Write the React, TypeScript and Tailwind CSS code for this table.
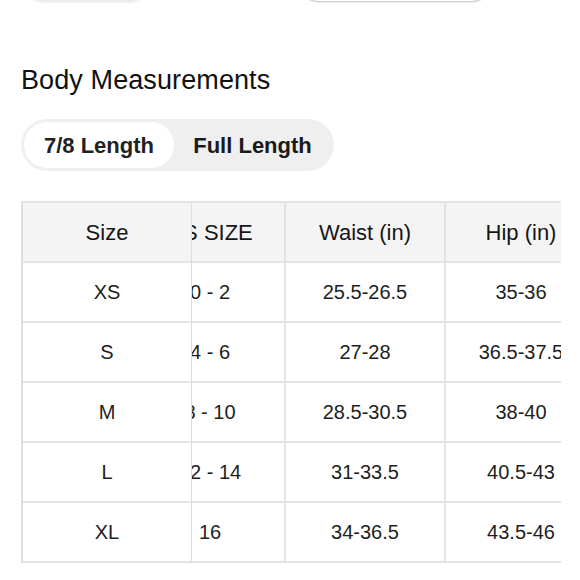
import React from 'react'

const rows = [
  { size: 'XS', us: '0 - 2', waist: '25.5-26.5', hip: '35-36' },
  { size: 'S', us: '4 - 6', waist: '27-28', hip: '36.5-37.5' },
  { size: 'M', us: '8 - 10', waist: '28.5-30.5', hip: '38-40' },
  { size: 'L', us: '12 - 14', waist: '31-33.5', hip: '40.5-43' },
  { size: 'XL', us: '16', waist: '34-36.5', hip: '43.5-46' },
]

const head = 'h-[60px] flex items-center justify-center bg-[#f4f4f4] border-b-2 border-[#e3e3e3] text-[22px] text-[#161616]'
const cell = 'h-[60px] flex items-center justify-center bg-white border-b-2 border-[#e3e3e3] text-[20px] text-[#1e1e1e]'

const App: React.FC = () => {
  return (
    <div className="min-h-screen bg-white pl-[21px] pr-[19px] font-['Liberation_Sans',Arial,sans-serif] overflow-hidden">
      {/* buttons above, scrolled mostly out of view */}
      <div className="flex -mt-[42px] h-[44px]">
        <div className="ml-[1px] w-[129px] h-full rounded-full border-2 border-[#ececec] bg-white shadow-[0_1px_2px_rgba(0,0,0,0.06)]" />
        <div className="ml-[146px] w-[196px] h-full rounded-full border border-[#cfcfcf] bg-white shadow-[0_1px_1px_rgba(0,0,0,0.08)]" />
      </div>

      <h2 className="mt-[62px] text-[27px] leading-[32px] text-[#111] tracking-[0.1px]">Body Measurements</h2>

      <div className="mt-[23px] inline-flex p-[3px] rounded-full bg-[#efefef]">
        <button className="w-[150px] h-[46px] rounded-full bg-white text-[22px] font-bold text-[#222]">7/8 Length</button>
        <button className="w-[157px] h-[46px] rounded-full text-[22px] font-bold text-[#1a1a1a]">Full Length</button>
      </div>

      <div className="mt-[30px] flex border-t-2 border-[#e3e3e3]">
        <div className="w-[171px] shrink-0 border-l-2 border-r border-[#dedede]">
          <div className={head}>Size</div>
          {rows.map((r) => (
            <div key={r.size} className={cell}>{r.size}</div>
          ))}
        </div>
        <div className="flex-1 overflow-hidden">
          <div className="flex -ml-[56px] w-max">
            <div className="w-[150px] border-r-2 border-[#e3e3e3]">
              <div className={head}>US SIZE</div>
              {rows.map((r) => (
                <div key={r.size} className={cell}>{r.us}</div>
              ))}
            </div>
            <div className="w-[160px] border-r-2 border-[#e3e3e3]">
              <div className={head}>Waist (in)</div>
              {rows.map((r) => (
                <div key={r.size} className={cell}>{r.waist}</div>
              ))}
            </div>
            <div className="w-[152px] border-r-2 border-[#e3e3e3]">
              <div className={head}>Hip (in)</div>
              {rows.map((r) => (
                <div key={r.size} className={cell}>{r.hip}</div>
              ))}
            </div>
          </div>
        </div>
      </div>
    </div>
  )
}

export default App
